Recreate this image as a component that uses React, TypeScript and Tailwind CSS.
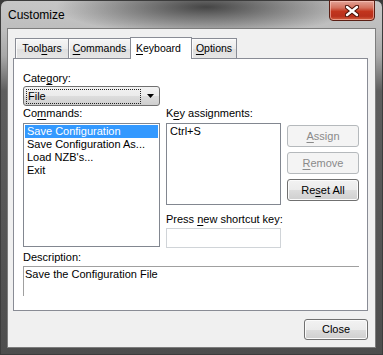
import React from "react";

type BtnProps = {
  children: React.ReactNode;
  disabled?: boolean;
  className?: string;
};

const Button: React.FC<BtnProps> = ({ children, disabled, className = "" }) => {
  return (
    <div
      className={`flex items-center justify-center rounded-[3px] border ${
        disabled
          ? "border-[#b5b9bc] bg-[#f4f4f4] text-[#8a8a8a]"
          : "border-[#707070] bg-[linear-gradient(180deg,#f2f2f2_0%,#ebebeb_50%,#dddddd_51%,#cfcfcf_100%)] text-black shadow-[inset_0_0_0_1px_#fbfbfb]"
      } ${className}`}
    >
      {children}
    </div>
  );
};

const Tab: React.FC<{ children: React.ReactNode; w: string; active?: boolean; first?: boolean }> = ({
  children,
  w,
  active,
  first,
}) => {
  if (active) {
    return (
      <div
        className={`${w} relative z-10 -mb-px -ml-px flex h-[22px] items-start whitespace-nowrap border border-b-0 border-[#898c95] bg-white pl-[5px] pt-[4px]`}
      >
        {children}
      </div>
    );
  }
  return (
    <div
      className={`${w} ${first ? "" : "-ml-px"} flex h-[20px] items-start justify-center whitespace-nowrap border border-b-0 border-[#898c95] bg-[linear-gradient(180deg,#f6f6f6_0%,#ebebeb_50%,#dedede_51%,#e6e6e6_100%)] pt-[3px] shadow-[inset_1px_1px_0_#fcfcfc]`}
    >
      {children}
    </div>
  );
};

const U: React.FC<{ children: React.ReactNode }> = ({ children }) => (
  <span className="underline underline-offset-[2px]">{children}</span>
);

export default function App() {
  return (
    <div className="h-[355px] w-[383px] bg-[#3a3a3a]">
      <div className="flex h-[355px] w-[383px] flex-col rounded-t-[7px] border border-[#3c3c3c] bg-[image:radial-gradient(ellipse_150px_28px_at_205px_6px,rgba(55,55,55,0.9),rgba(70,70,70,0)),linear-gradient(180deg,#c6c6c6_0px,#bdbdbd_30px,#a8a8a8_55px,#5e5e5e_90px,#4d4d4d_100%)] font-['Liberation_Sans',Arial,sans-serif] text-[11px] leading-[13px] text-black">
        {/* Title bar */}
        <div className="flex h-[27px] items-start">
          <span className="ml-[7px] mt-[7px] text-[12px] leading-[14px] text-black">Customize</span>
          <div className="-mt-px ml-auto mr-[7px] flex h-[21px] w-[46px] items-center justify-center rounded-b-[4px] border border-[#5a1e14] bg-[linear-gradient(180deg,#e3a397_0%,#d4725f_35%,#c2351d_55%,#b8301c_80%,#d4603f_100%)] shadow-[inset_0_0_0_1px_rgba(255,210,200,0.55)]">
            <svg width="14" height="12" viewBox="0 0 14 12">
              <path d="M2 2 L12 10 M12 2 L2 10" stroke="#4a1208" strokeWidth="4.5" strokeLinecap="round" fill="none" />
              <path d="M2 2 L12 10 M12 2 L2 10" stroke="#ffffff" strokeWidth="2.4" strokeLinecap="round" fill="none" />
            </svg>
          </div>
        </div>

        {/* Client area */}
        <div className="mx-[6px] mb-[6px] flex flex-1 flex-col border border-[#7d7d7d] bg-[#f0f0f0]">
          {/* Tabs */}
          <div className="ml-[7px] mt-[8px] flex h-[21px] items-end text-[10.5px]">
            <Tab w="w-[54px]" first>
              <span>
                Tool<U>b</U>ars
              </span>
            </Tab>
            <Tab w="w-[63px]">
              <span>
                <U>C</U>ommands
              </span>
            </Tab>
            <Tab w="w-[62px]" active>
              <span>
                <U>K</U>eyboard
              </span>
            </Tab>
            <Tab w="w-[46px]">
              <span>
                <U>O</U>ptions
              </span>
            </Tab>
          </div>

          {/* Panel */}
          <div className="ml-[5px] mr-[7px] flex h-[253px] flex-col border border-[#898c95] bg-white pl-[9px]">
            <div className="mt-[13px]">
              Cate<U>g</U>ory:
            </div>
            <div className="mt-[1px] flex h-[20px] w-[137px] items-center rounded-[3px] border border-[#707070] bg-[linear-gradient(180deg,#f2f2f2_0%,#ebebeb_50%,#dddddd_51%,#cfcfcf_100%)] pl-[2px] pr-[5px]">
              <div className="flex h-[15px] w-[115px] items-center border border-dotted border-[#222] pl-[1px]">File</div>
              <svg className="ml-auto" width="7" height="4" viewBox="0 0 7 4">
                <path d="M0 0 H7 L3.5 4 Z" fill="#000" />
              </svg>
            </div>

            <div className="mt-[1px] flex gap-[6px]">
              {/* Commands column */}
              <div className="flex w-[137px] flex-col">
                <div>
                  Co<U>m</U>mands:
                </div>
                <div className="mt-[3px] h-[124px] border border-[#828790] bg-white p-px">
                  <div className="bg-[#3399ff] pl-[2px] text-white">Save Configuration</div>
                  <div className="pl-[2px]">Save Configuration As...</div>
                  <div className="pl-[2px]">Load NZB's...</div>
                  <div className="pl-[2px]">Exit</div>
                </div>
              </div>

              {/* Key assignments column */}
              <div className="flex w-[115px] flex-col">
                <div className="whitespace-nowrap">
                  K<U>e</U>y assignments:
                </div>
                <div className="mt-[3px] h-[82px] border border-[#828790] bg-white p-px">
                  <div className="pl-[2px]">Ctrl+S</div>
                </div>
                <div className="mt-[8px] whitespace-nowrap">
                  Press <U>n</U>ew shortcut key:
                </div>
                <div className="mt-[2px] h-[20px] border border-[#d0d4d8] bg-white" />
              </div>

              {/* Buttons */}
              <div className="flex w-[72px] flex-col pt-[18px]">
                <Button disabled className="h-[22px]">
                  <span>
                    <U>A</U>ssign
                  </span>
                </Button>
                <Button disabled className="mt-[5px] h-[22px]">
                  <span>
                    <U>R</U>emove
                  </span>
                </Button>
                <Button className="mt-[5px] h-[22px]">
                  <span>
                    Re<U>s</U>et All
                  </span>
                </Button>
              </div>
            </div>

            <div className="mt-[3px]">Description:</div>
            <div className="mt-[2px] h-[30px] w-[336px] border-l border-t border-[#a0a0a0] pl-px pt-px">
              Save the Configuration File
            </div>
          </div>

          {/* Footer */}
          <div className="mr-[7px] mt-[8px] flex justify-end">
            <Button className="h-[21px] w-[64px]">Close</Button>
          </div>
        </div>
      </div>
    </div>
  );
}
